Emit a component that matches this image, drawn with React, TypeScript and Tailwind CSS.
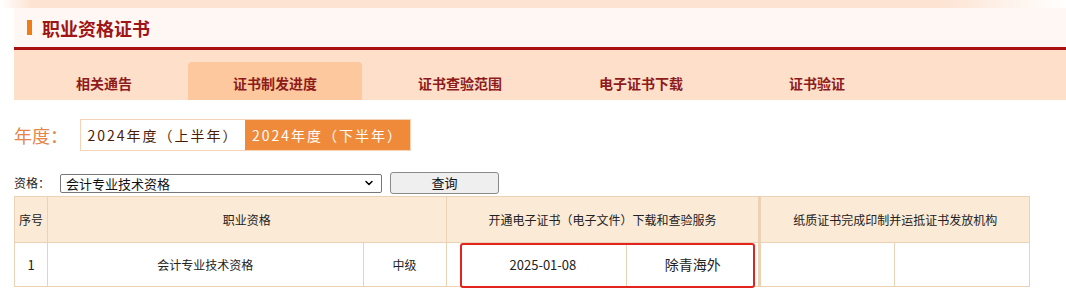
import { ChevronDown } from 'lucide-react'

const tabs = [
  { label: '相关通告', cls: 'w-[174px] pl-[6px]' },
  { label: '证书制发进度', cls: 'w-[174px]' },
  { label: '证书查验范围', cls: 'w-[196px]' },
  { label: '电子证书下载', cls: 'w-[166px]' },
  { label: '证书验证', cls: 'w-[186px]' },
]

export default function App() {
  return (
    <div className="relative h-[293px] w-[1066px] overflow-hidden bg-white font-['Noto_Sans_CJK_SC',sans-serif] text-[#333]">
      {/* top peach band */}
      <div className="h-[8px] w-full bg-[linear-gradient(90deg,#ffffff_0%,#fde3d2_3%,#fde3d2_88%,#ffffff_100%)]" />

      <div className="ml-[14px]">
        {/* title bar */}
        <div className="flex h-[39px] items-center bg-[#fff7f3] pl-[13px]">
          <span className="h-[15px] w-[5px] bg-[#ef7d16]" />
          <span className="ml-[10px] text-[18px] font-bold leading-none text-[#9e1515]">职业资格证书</span>
        </div>
        <div className="h-[3px] bg-[#a80f0f]" />

        {/* tabs */}
        <div className="flex h-[50px] items-end bg-[#fedfca]">
          {tabs.map((t, i) => (
            <div
              key={t.label}
              className={`flex h-[38px] items-center justify-center pt-[5px] text-[14px] font-bold text-[#8d1b1b] ${t.cls} ${
                i === 1 ? 'rounded-t-[4px] bg-[#fdc89e]' : ''
              }`}
            >
              {t.label}
            </div>
          ))}
        </div>

        {/* year */}
        <div className="mt-[19px] flex items-center">
          <span className="w-[66px] text-[18px] leading-none text-[#e4854a]">年度：</span>
          <div className="flex h-[32px] border border-[#f6d3b6]">
            <div className="flex w-[164px] items-center justify-center bg-white text-[14px] tracking-[2px] text-[#4a1c05]">
              2024年度（上半年）
            </div>
            <div className="flex w-[165px] items-center justify-center bg-[#f08a3b] text-[14px] tracking-[2px] text-white">
              2024年度（下半年）
            </div>
          </div>
        </div>

        {/* select row */}
        <div className="mt-[21px] flex h-[22px] items-center">
          <span className="w-[46px] text-[12px] text-[#222]">资格：</span>
          <div className="flex h-[19px] w-[322px] items-center justify-between rounded-[2px] border border-[#777] bg-white pl-[5px] pr-[6px] text-[13px] leading-none text-[#111]">
            <span>会计专业技术资格</span>
            <ChevronDown className="h-[12px] w-[12px] text-black" strokeWidth={3} />
          </div>
          <div className="ml-[8px] flex h-[22px] w-[109px] items-center justify-center rounded-[3px] border border-[#8a8a8a] bg-[#efefef] text-[13px] text-[#111]">
            查询
          </div>
        </div>

        {/* table */}
        <div className="relative mt-[2px] w-[1016px]">
          <table className="w-full border-collapse text-[12px] text-[#222]">
            <colgroup>
              <col className="w-[33px]" />
              <col className="w-[316px]" />
              <col className="w-[83px]" />
              <col className="w-[181px]" />
              <col className="w-[133px]" />
              <col className="w-[135px]" />
              <col className="w-[135px]" />
            </colgroup>
            <tbody>
              <tr className="h-[46px] bg-[#fbead6]">
                <td className="border border-[#ecd2b4] text-center">序号</td>
                <td colSpan={2} className="border border-[#ecd2b4] text-center">职业资格</td>
                <td colSpan={2} className="border border-[#ecd2b4] border-r-[3px] text-center">
                  开通电子证书（电子文件）下载和查验服务
                </td>
                <td colSpan={2} className="border border-[#ecd2b4] text-center">
                  纸质证书完成印制并运抵证书发放机构
                </td>
              </tr>
              <tr className="h-[44px] bg-white">
                <td className="border border-[#ecd2b4] text-center text-[13px]">1</td>
                <td className="border border-[#ecd2b4] text-center">会计专业技术资格</td>
                <td className="border border-[#ecd2b4] text-center">中级</td>
                <td className="border border-[#ecd2b4] pl-[63px] text-left text-[13px]">2025-01-08</td>
                <td className="border border-[#ecd2b4] border-r-[3px] text-center text-[14px]">除青海外</td>
                <td className="border border-[#ecd2b4]" />
                <td className="border border-[#ecd2b4]" />
              </tr>
            </tbody>
          </table>
          {/* highlight */}
          <div className="absolute left-[446px] top-[47px] h-[45px] w-[295px] rounded-[3px] border-[2px] border-[#e3231d]" />
        </div>
      </div>
    </div>
  )
}
